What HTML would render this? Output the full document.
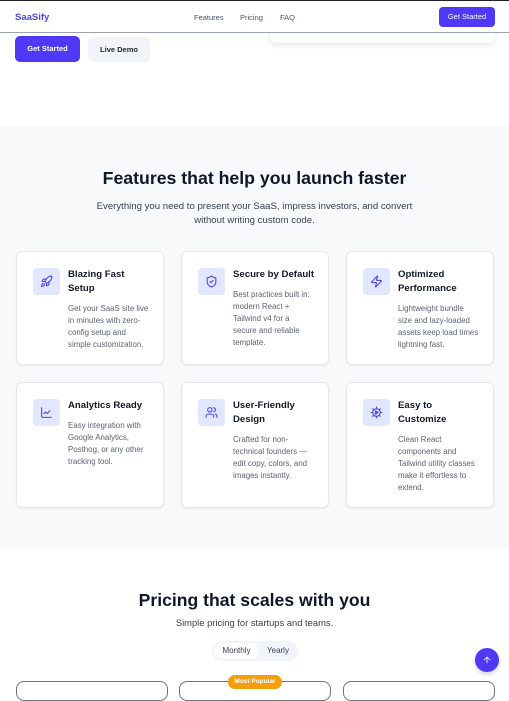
<!DOCTYPE html>
<html><head><style>
*{margin:0;padding:0;box-sizing:border-box}
body{width:509px;height:683px;overflow:hidden;font-family:"Liberation Sans",sans-serif;background:#fff;position:relative;color:#111827}
.abs{position:absolute}
.nav{position:absolute;left:0;top:0;width:509px;height:33px;background:#fff;border-top:1px solid #222;border-bottom:1px solid #9ca3af;z-index:5}
.gray{position:absolute;left:0;top:126px;width:509px;height:422px;background:#f8f9fb}
.card{position:absolute;width:148px;background:#fff;border:1px solid #e5e7eb;border-radius:6px;box-shadow:0 1px 2px rgba(0,0,0,.06)}
.ic{position:absolute;left:16px;top:16px;width:27px;height:27px;border-radius:4px;background:#e0e7ff;display:flex;align-items:center;justify-content:center}
.t{position:absolute;left:51px;top:16px;white-space:nowrap;font-size:9.6px;font-weight:bold;line-height:14px;color:#111827}
.d{position:absolute;left:51px;white-space:nowrap;font-size:7.9px;line-height:12px;color:#5b6372}
svg{width:13px;height:13px;fill:none;stroke:#4f46e5;stroke-width:2;stroke-linecap:round;stroke-linejoin:round}
.pc{position:absolute;top:681px;width:152px;height:20px;border:1px solid #6b7280;border-radius:8px}
</style></head><body>
<div class="abs" style="left:270px;top:20px;width:225px;height:23px;background:#fff;border-radius:6px;box-shadow:0 2px 6px rgba(0,0,0,.1)"></div>
<div class="nav">
<div class="abs" style="left:15px;top:11px;font-size:9.5px;font-weight:bold;color:#4f46e5">SaaSify</div>
<div class="abs" style="left:194px;top:12px;font-size:7.5px;color:#4b5563">Features</div>
<div class="abs" style="left:240px;top:12px;font-size:7.5px;color:#4b5563">Pricing</div>
<div class="abs" style="left:280px;top:12px;font-size:7.5px;color:#4b5563">FAQ</div>
<div class="abs" style="left:439px;top:6px;width:56px;height:20px;background:#4f39f6;border-radius:4px;color:#fff;font-size:7.5px;text-align:center;line-height:20px">Get Started</div>
</div>
<div class="abs" style="left:15px;top:36px;width:65px;height:26px;background:#4f39f6;border-radius:5px;color:#fff;font-size:7.5px;font-weight:bold;text-align:center;line-height:26px">Get Started</div>
<div class="abs" style="left:88px;top:37px;width:62px;height:25px;background:#f1f4f8;border-radius:5px;color:#1f2937;font-size:7.5px;font-weight:bold;text-align:center;line-height:25px">Live Demo</div>
<div class="gray"></div>
<div class="abs" style="left:0;top:168px;width:509px;text-align:center;font-size:17.7px;font-weight:bold;color:#0f172a">Features that help you launch faster</div>
<div class="abs" style="left:0;top:200px;width:509px;text-align:center;font-size:9.6px;line-height:14px;color:#374151;white-space:nowrap">Everything you need to present your SaaS, impress investors, and convert<br>without writing custom code.</div>

<div class="card" style="left:16px;top:251px;height:114px"><div class="ic"><svg viewBox="0 0 24 24"><path d="M4.5 16.5c-1.5 1.3-2 5-2 5s3.7-.5 5-2c.7-.8.7-2.1-.1-2.9a2.2 2.2 0 0 0-2.9-.1z"/><path d="M12 15l-3-3a22 22 0 0 1 2-3.9A12.9 12.9 0 0 1 22 2c0 2.7-.8 7.5-6 11a22 22 0 0 1-4 2z"/><path d="M9 12H4s.6-3 2-4c1.6-1.1 5 0 5 0M12 15v5s3-.6 4-2c1.1-1.6 0-5 0-5"/></svg></div><div class="t">Blazing Fast<br>Setup</div><div class="d" style="top:51px">Get your SaaS site live<br>in minutes with zero-<br>config setup and<br>simple customization.</div></div>
<div class="card" style="left:181px;top:251px;height:114px"><div class="ic"><svg viewBox="0 0 24 24"><path d="M20 13c0 5-3.5 7.5-7.7 9a1 1 0 0 1-.7 0C7.5 20.5 4 18 4 13V6a1 1 0 0 1 1-1c2 0 4.5-1.2 6.2-2.7a1.2 1.2 0 0 1 1.6 0C14.5 3.8 17 5 19 5a1 1 0 0 1 1 1z"/><path d="M9 12l2 2 4-4"/></svg></div><div class="t">Secure by Default</div><div class="d" style="top:37px">Best practices built in:<br>modern React +<br>Tailwind v4 for a<br>secure and reliable<br>template.</div></div>
<div class="card" style="left:346px;top:251px;height:114px"><div class="ic"><svg viewBox="0 0 24 24"><path d="M4 14a1 1 0 0 1-.8-1.6l9.9-10.2a.5.5 0 0 1 .9.5l-1.9 6A1 1 0 0 0 13 10h7a1 1 0 0 1 .8 1.6l-9.9 10.2a.5.5 0 0 1-.9-.5l1.9-6A1 1 0 0 0 11 14z"/></svg></div><div class="t">Optimized<br>Performance</div><div class="d" style="top:51px">Lightweight bundle<br>size and lazy-loaded<br>assets keep load times<br>lightning fast.</div></div>

<div class="card" style="left:16px;top:382px;height:126px"><div class="ic"><svg viewBox="0 0 24 24"><path d="M3 3v16a2 2 0 0 0 2 2h16"/><path d="M18 9l-5 5-3-3-3 3"/></svg></div><div class="t">Analytics Ready</div><div class="d" style="top:37px">Easy integration with<br>Google Analytics,<br>Posthog, or any other<br>tracking tool.</div></div>
<div class="card" style="left:181px;top:382px;height:126px"><div class="ic"><svg viewBox="0 0 24 24"><path d="M16 21v-2a4 4 0 0 0-4-4H6a4 4 0 0 0-4 4v2"/><circle cx="9" cy="7" r="4"/><path d="M22 21v-2a4 4 0 0 0-3-3.9M16 3.1a4 4 0 0 1 0 7.8"/></svg></div><div class="t">User-Friendly<br>Design</div><div class="d" style="top:51px">Crafted for non-<br>technical founders —<br>edit copy, colors, and<br>images instantly.</div></div>
<div class="card" style="left:346px;top:382px;height:126px"><div class="ic"><svg viewBox="0 0 24 24"><circle cx="12" cy="12" r="7"/><path d="M12 2v3M12 19v3M2 12h3M19 12h3M5 5l2 2M17 17l2 2M5 19l2-2M17 7l2-2"/><path d="M10 9l5 3-5 3z" fill="#4f46e5"/></svg></div><div class="t">Easy to<br>Customize</div><div class="d" style="top:51px">Clean React<br>components and<br>Tailwind utility classes<br>make it effortless to<br>extend.</div></div>

<div class="abs" style="left:0;top:590px;width:509px;text-align:center;font-size:17.6px;font-weight:bold;color:#0f172a">Pricing that scales with you</div>
<div class="abs" style="left:0;top:617px;width:509px;text-align:center;font-size:9.4px;color:#374151">Simple pricing for startups and teams.</div>
<div class="abs" style="left:212px;top:641px;width:86px;height:20px;background:#f1f4f8;border-radius:10px"></div>
<div class="abs" style="left:214px;top:643px;width:45px;height:16px;background:#fff;border-radius:8px;font-size:8px;color:#374151;text-align:center;line-height:16px">Monthly</div>
<div class="abs" style="left:261px;top:643px;width:34px;height:16px;font-size:8px;color:#374151;text-align:center;line-height:16px">Yearly</div>
<div class="pc" style="left:16px"></div><div class="pc" style="left:179px"></div><div class="pc" style="left:343px"></div>
<div class="abs" style="left:228px;top:675px;width:54px;height:14px;background:#f59e0b;border-radius:7px;color:#fff;font-size:6.5px;font-weight:bold;text-align:center;line-height:14px">Most Popular</div>
<div class="abs" style="left:475px;top:648px;width:24px;height:24px;border-radius:50%;background:#4f39f6;box-shadow:0 2px 4px rgba(0,0,0,.2)"><svg viewBox="0 0 24 24" style="position:absolute;left:7px;top:7px;width:10px;height:10px;stroke:#fff"><path d="M12 19V5M5 12l7-7 7 7"/></svg></div>
</body></html>
